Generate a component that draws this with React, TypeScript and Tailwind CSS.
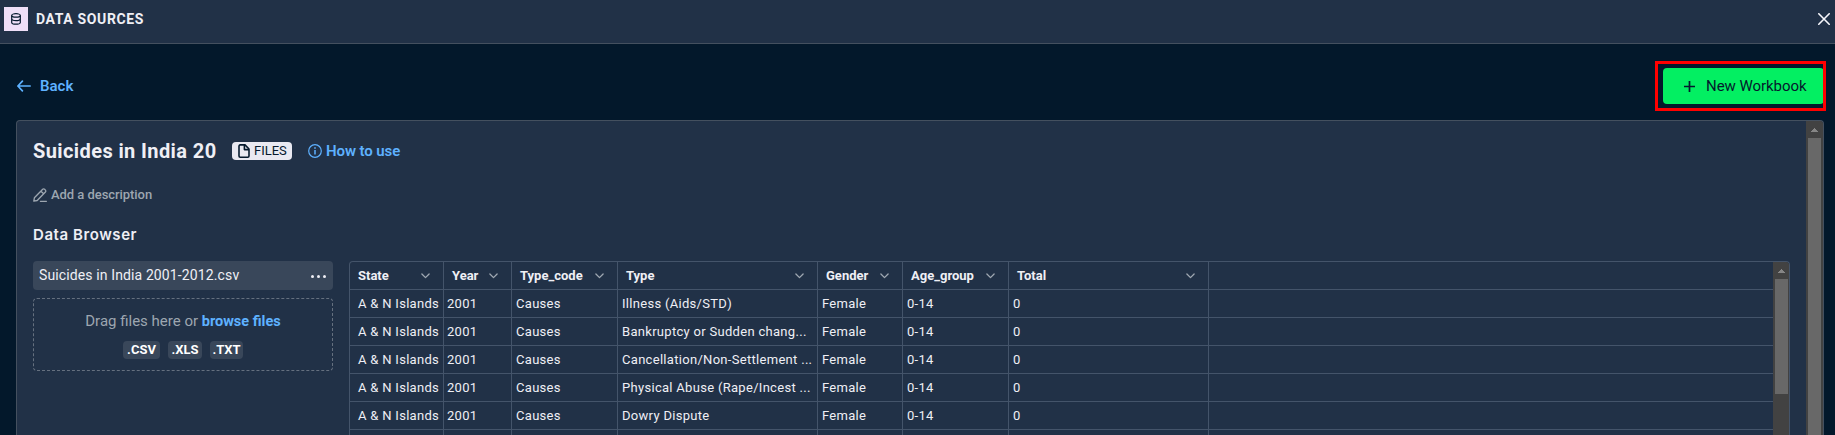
import React from "react";

const columns = [
  { name: "State", width: "w-[94px]", pad: "pl-2" },
  { name: "Year", width: "w-[68px]", pad: "pl-[3px]" },
  { name: "Type_code", width: "w-[106px]", pad: "pl-1" },
  { name: "Type", width: "w-[200px]", pad: "pl-1" },
  { name: "Gender", width: "w-[85px]", pad: "pl-1" },
  { name: "Age_group", width: "w-[106px]", pad: "pl-1" },
  { name: "Total", width: "w-[200px]", pad: "pl-1" },
];

const types = [
  "Illness (Aids/STD)",
  "Bankruptcy or Sudden chang...",
  "Cancellation/Non-Settlement ...",
  "Physical Abuse (Rape/Incest ...",
  "Dowry Dispute",
];

const rows = types.map((type) => ["A & N Islands", "2001", "Causes", type, "Female", "0-14", "0"]);

function DatabaseIcon() {
  return (
    <svg width="12" height="12" viewBox="0 0 12 12" fill="none" stroke="#05192d" strokeWidth="1.2">
      <ellipse cx="6" cy="2.4" rx="4.3" ry="1.7" />
      <path d="M1.7 2.4v7c0 1 1.9 1.8 4.3 1.8s4.3-.8 4.3-1.8v-7M1.7 5.8c0 1 1.9 1.8 4.3 1.8s4.3-.8 4.3-1.8" />
    </svg>
  );
}

function CloseIcon() {
  return (
    <svg width="12" height="12" viewBox="0 0 12 12" stroke="#f7f7fc" strokeWidth="1.6" strokeLinecap="round">
      <path d="M.8.8l10.4 10.4M11.2.8L.8 11.2" />
    </svg>
  );
}

function BackIcon() {
  return (
    <svg width="14" height="12" viewBox="0 0 14 12" fill="none" stroke="#5eb1ff" strokeWidth="1.7" strokeLinecap="round" strokeLinejoin="round">
      <path d="M5.4 1.2L.9 6l4.5 4.8M.9 6h12.3" />
    </svg>
  );
}

function FileIcon() {
  return (
    <svg width="12" height="14" viewBox="0 0 12 14" fill="none" stroke="#05192d" strokeWidth="1.6" strokeLinejoin="round">
      <path d="M1 2.2C1 1.4 1.5.9 2.2.9H7L11 5v7c0 .7-.5 1.2-1.2 1.2H2.2c-.7 0-1.2-.5-1.2-1.2z" />
      <path d="M6.4 1v4.6H11" />
    </svg>
  );
}

function InfoIcon() {
  return (
    <svg width="14" height="14" viewBox="0 0 14 14" fill="none" stroke="#5eb1ff" strokeWidth="1.2">
      <circle cx="7" cy="7" r="6.3" />
      <path d="M7 6v4.6" strokeWidth="1.5" />
      <path d="M7 3.2v1.6" strokeWidth="1.6" />
    </svg>
  );
}

function EditIcon() {
  return (
    <svg width="14" height="14" viewBox="0 0 14 14" fill="none" stroke="#9da6b0" strokeWidth="1.3" strokeLinejoin="round" strokeLinecap="round">
      <path d="M.8 13.2l.6-3.4 8.3-8.5c.6-.6 1.3-.6 1.9 0l.8.8c.6.6.6 1.3 0 1.9l-8.2 8.5zM8 3.2l2.6 2.6M7.4 13.3h6" />
    </svg>
  );
}

function Chevron() {
  return (
    <svg width="9" height="6" viewBox="0 0 9 6" fill="none" stroke="#9da6b0" strokeWidth="1.3" strokeLinecap="round" strokeLinejoin="round">
      <path d="M.9 1l3.6 3.6L8.1 1" />
    </svg>
  );
}

function ScrollUp() {
  return (
    <svg width="7" height="4" viewBox="0 0 7 4" fill="#868686" shapeRendering="crispEdges">
      <path d="M3 0h1v1h1v1h1v1h1v1H0V3h1V2h1V1h1z" />
    </svg>
  );
}

export default function App() {
  return (
    <div className="relative flex h-[435px] w-full flex-col overflow-hidden bg-[#03182b] font-['Roboto',sans-serif] text-[#efeff5]">
      <header className="flex h-11 shrink-0 items-start justify-between border-b border-[#44505f] bg-[#213147]">
        <div className="mt-[7px] ml-1 flex h-6 items-center">
          <span className="flex size-6 items-center justify-center bg-[#efdff8]"><DatabaseIcon /></span>
          <h1 className="ml-2 text-sm font-bold leading-6 tracking-[0.63px]">DATA SOURCES</h1>
        </div>
        <button className="mt-[13px] mr-[5px]" aria-label="Close"><CloseIcon /></button>
      </header>

      <div className="flex h-[76px] shrink-0 items-center justify-between pt-2 pr-[11px] pl-[17px]">
        <a className="flex items-center gap-[9px] text-[15px] font-semibold leading-9 text-[#5eb1ff]">
          <BackIcon />
          Back
        </a>
        <button className="flex h-9 w-[161px] items-center rounded bg-[#03ef62] pl-[21px] text-[15px] leading-9 text-[#05192d]">
          <svg width="11" height="11" viewBox="0 0 11 11" stroke="#05192d" strokeWidth="1.7"><path d="M5.5 0v11M0 5.5h11" /></svg>
          <span className="ml-[11px] tracking-[-0.05px]">New Workbook</span>
        </button>
      </div>

      <main className="mr-[11px] ml-4 flex min-h-0 flex-1 rounded-t border border-b-0 border-[#44505f] bg-[#213147]">
        <section className="flex min-w-0 flex-1 flex-col px-4">
          <div className="mt-[17px] flex h-[26px] items-center">
            <h2 className="w-[199px] shrink-0 whitespace-nowrap text-xl font-bold leading-[26px] tracking-[0.4px]">Suicides in India 20</h2>
            <span className="flex h-[18px] w-[60px] items-center rounded bg-[#e9e9f1] pl-1.5 text-[13px] leading-[18px] text-[#05192d]">
              <FileIcon />
              <span className="-mt-px ml-1">FILES</span>
            </span>
            <a className="ml-4 flex items-center gap-1 text-[15px] font-semibold leading-5 tracking-[-0.1px] text-[#5eb1ff]">
              <InfoIcon />
              How to use
            </a>
          </div>
          <div className="mt-[21px] flex h-5 items-center gap-1 text-[13px] font-medium leading-5 tracking-[-0.05px] text-[#9da6b0]">
            <EditIcon />
            <span>Add a description</span>
          </div>
          <h3 className="mt-[18px] h-6 font-['Inter',sans-serif] text-[15px] font-semibold leading-6 tracking-[0.57px]">Data Browser</h3>

          <div className="mt-[14px] flex min-h-0 flex-1">
            <aside className="w-[300px] shrink-0">
              <div className="flex h-[29px] items-center justify-between rounded bg-[#39475a] pr-[7px] pl-1.5">
                <span className="whitespace-nowrap pb-px text-sm tracking-[0.12px]">Suicides in India 2001-2012.csv</span>
                <span className="flex gap-[3px] pt-px">
                  <i className="size-[3px] rounded-full bg-[#efeff5]" />
                  <i className="size-[3px] rounded-full bg-[#efeff5]" />
                  <i className="size-[3px] rounded-full bg-[#efeff5]" />
                </span>
              </div>
              <div className="mt-2 flex h-[73px] flex-col items-center rounded border border-dashed border-[#65707f] pt-[11px]">
                <p className="whitespace-nowrap text-[15px] leading-[22px] text-[#9da6b0]">
                  Drag files here or <a className="text-[14.5px] font-bold text-[#5eb1ff]">browse files</a>
                </p>
                <div className="mt-2 flex gap-2 text-[13px] font-bold leading-[17px] text-white">
                  <span className="h-[18px] w-[37px] rounded bg-[#39475a] text-center">.CSV</span>
                  <span className="h-[18px] w-[34px] rounded bg-[#39475a] text-center">.XLS</span>
                  <span className="h-[18px] w-[33px] rounded bg-[#39475a] text-center">.TXT</span>
                </div>
              </div>
            </aside>

            <div className="ml-4 flex min-w-0 flex-1 overflow-hidden rounded-t border border-b-0 border-[#44546a]">
              <div className="min-w-0 flex-1">
                <div className="flex h-7 border-b border-[#44546a]">
                  {columns.map((c) => (
                    <div key={c.name} className={`flex shrink-0 items-center justify-between border-r border-[#44546a] pr-[13px] pl-2 text-[13px] font-bold ${c.width}`}>
                      {c.name}
                      <Chevron />
                    </div>
                  ))}
                </div>
                {rows.map((row) => (
                  <div key={row[3]} className="flex h-7 border-b border-[#44546a] text-[13px] tracking-[0.3px]">
                    {row.map((cell, i) => (
                      <div key={columns[i].name} className={`shrink-0 whitespace-nowrap border-r border-[#44546a] leading-[27px] ${columns[i].width} ${columns[i].pad}`}>
                        {cell}
                      </div>
                    ))}
                  </div>
                ))}
                <div className="flex h-7">
                  {columns.map((c) => (
                    <div key={c.name} className={`shrink-0 border-r border-[#44546a] ${c.width}`} />
                  ))}
                </div>
              </div>
              <div className="flex w-4 flex-col items-center bg-[#424242]">
                <div className="flex h-[17px] shrink-0 items-center pt-px"><ScrollUp /></div>
                <div className="h-[115px] w-[13px] shrink-0 bg-[#686868]" />
              </div>
            </div>
          </div>
        </section>
        <div className="flex w-[17px] shrink-0 flex-col items-center rounded-tr-[3px] bg-[#424242]">
          <div className="flex h-[17px] shrink-0 items-center pt-px"><ScrollUp /></div>
          <div className="w-[13px] flex-1 bg-[#686868]" />
        </div>
      </main>

      <div className="pointer-events-none absolute top-[61px] right-[9px] h-[50px] w-[171px] border-[3px] border-[#ff0000]" />
    </div>
  );
}
